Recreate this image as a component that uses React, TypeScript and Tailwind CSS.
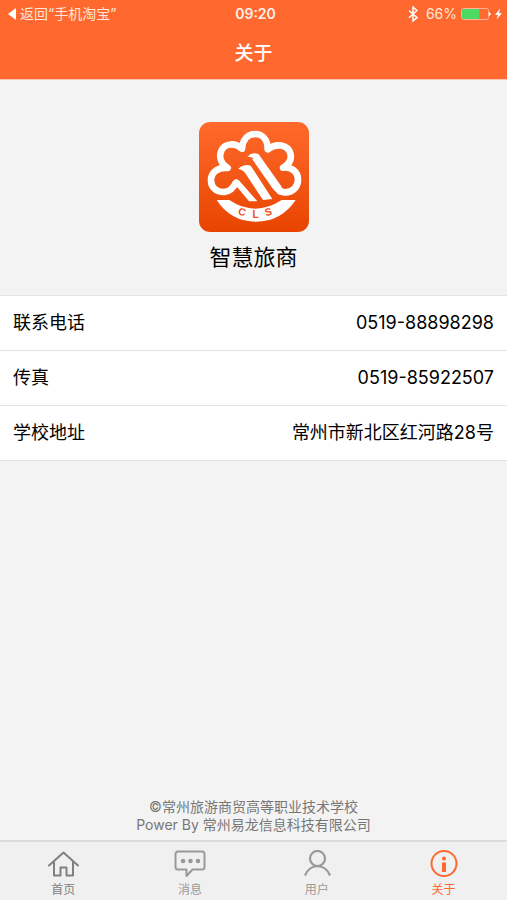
import { useState } from 'react';

type IconProps = {
  className?: string;
};

function HomeIcon({ className }: IconProps) {
  return (
    <svg viewBox="0 0 32 28" fill="none" stroke="currentColor" strokeWidth="2" strokeLinecap="round" strokeLinejoin="round" className={className}>
      <path d="M2 15.500 16.500 2.500l14.500 13" />
      <path d="M7 12v13.500h6.500V17.500h6v8H26V12" />
    </svg>
  );
}

function MessageIcon({ className }: IconProps) {
  return (
    <svg viewBox="0 0 32 28" fill="none" stroke="currentColor" strokeWidth="2" strokeLinejoin="round" className={className}>
      <path d="M4 1.500h24A2.500 2.500 0 0 1 30.500 4v13a2.500 2.500 0 0 1-2.500 2.500h-9.500L12.500 26v-6.500H4A2.500 2.500 0 0 1 1.500 17V4A2.500 2.500 0 0 1 4 1.500Z" />
      <g fill="currentColor" stroke="none">
        <circle cx="9" cy="11" r="2.300" />
        <circle cx="16.500" cy="11" r="2.300" />
        <circle cx="24" cy="11" r="2.300" />
      </g>
    </svg>
  );
}

function UserIcon({ className }: IconProps) {
  return (
    <svg viewBox="0 0 32 28" fill="none" stroke="currentColor" strokeWidth="2.200" className={className}>
      <circle cx="16.500" cy="8.500" r="7.500" />
      <path d="M4 25.500C6 20 10.800 16.200 16.500 16.200S27 20 29 25.500" />
    </svg>
  );
}

function InfoIcon({ className }: IconProps) {
  return (
    <svg viewBox="0 0 32 28" fill="none" stroke="currentColor" strokeWidth="2" className={className}>
      <circle cx="16" cy="13.500" r="12.500" />
      <circle cx="16" cy="8.500" r="2" fill="currentColor" stroke="none" />
      <path d="M16 12.500v9.500" strokeWidth="4" />
    </svg>
  );
}

function BluetoothIcon() {
  return (
    <svg viewBox="0 0 10 16" fill="none" stroke="currentColor" strokeWidth="1.500" className="h-4 w-2.5">
      <path d="m1 4.500 8 7.200L5 15V1l4 3.500-8 7.200" />
    </svg>
  );
}

function BatteryIcon() {
  return (
    <svg viewBox="0 0 42 14" className="ml-1 h-3.5 w-[42px]">
      <rect x="0.500" y="1.500" width="27" height="11" rx="2" fill="none" stroke="#ffb294" />
      <path d="M1 3.500A1.500 1.500 0 0 1 2.500 2H18.500v10h-16A1.500 1.500 0 0 1 1 10.500Z" fill="#4cd964" />
      <path d="M28.500 5.500q1.500 1.500 0 3Z" fill="#fff" stroke="#fff" />
      <path d="m39 1.500-5 6.500h3l-1.500 4.500L41 6.200h-3Z" fill="#fff" />
    </svg>
  );
}

function Logo() {
  return (
    <svg viewBox="0 0 330 330" role="img" aria-label="CLS" className="size-[110px]">
      <defs>
        <linearGradient id="logo-bg" x1="0" y1="0" x2="0" y2="1">
          <stop offset="0" stopColor="#ff6a2c" />
          <stop offset="1" stopColor="#e84400" />
        </linearGradient>
      </defs>
      <rect width="330" height="330" rx="34" fill="url(#logo-bg)" />
      <path
        d="M168 106 228 192C238 206 246 211 258 211C281 211 297 195 297 173C297 150 278 134 252 137C270 127 279 112 274 94C266 68 232 62 206 82C206 53 191 36 168 36C145 36 131 54 129 80C108 61 79 64 68 84C58 104 66 125 86 138C57 136 36 150 36 175C36 197 53 211 76 210C94 208 103 198 111 181"
        fill="none"
        stroke="#fff"
        strokeWidth="20"
        strokeLinejoin="round"
      />
      <g fill="#fff">
        <path d="M101 180q8-16 20-4l54 62h-25l-40-48Z" />
        <path d="M118 140q18-16 37-9l65 100-28 3-53-80q-7-11-21-14Z" />
        <path d="M145 104q15-16 34-7l67 94 12 29-21-3-65-99q-9-14-27-14Z" />
        <path d="M53 234h38q77 52 157 0h42q-43 65-119 65T53 234Z" />
      </g>
      <g fill="#f05018" fontSize="31" fontWeight="700" textAnchor="middle" className="font-['Liberation_Sans',sans-serif]">
        <text x="129" y="280" transform="rotate(16 129 270)">C</text>
        <text x="170" y="289">L</text>
        <text x="208" y="280" transform="rotate(-16 208 270)">S</text>
      </g>
    </svg>
  );
}

const contacts = [
  { label: '联系电话', value: '0519-88898298' },
  { label: '传真', value: '0519-85922507' },
  { label: '学校地址', value: '常州市新北区红河路28号' },
];

const tabs = [
  { id: 'home', label: '首页', Icon: HomeIcon, color: 'text-[#808080]' },
  { id: 'message', label: '消息', Icon: MessageIcon, color: 'text-[#999999]' },
  { id: 'user', label: '用户', Icon: UserIcon, color: 'text-[#999999]' },
  { id: 'about', label: '关于', Icon: InfoIcon, color: 'text-[#999999]' },
];

export default function App() {
  const [activeTab, setActiveTab] = useState('about');

  return (
    <div className="flex min-h-screen flex-col bg-[#f3f3f3] font-[Inter,'Noto_Sans_CJK_SC',sans-serif] text-black">
      <header className="border-b border-[#fbc5ae] bg-[#ff692f] text-white">
        <div className="grid h-7 grid-cols-3 items-center pl-2 pr-1 text-sm">
          <button type="button" className="flex items-center gap-1 whitespace-nowrap text-[#ffe5da]">
            <svg viewBox="0 0 8 12" className="h-3 w-2" fill="#fff">
              <path d="M8 0v12L0 6Z" />
            </svg>
            <span>返回“手机淘宝”</span>
          </button>
          <span className="text-center font-semibold text-[#fff0e9]">09:20</span>
          <div className="flex items-center justify-end">
            <BluetoothIcon />
            <span className="ml-2 text-[#ffe5da]">66%</span>
            <BatteryIcon />
          </div>
        </div>
        <h1 className="pt-3 pb-[11px] text-center text-[19px] leading-7 font-medium">关于</h1>
      </header>

      <main className="flex flex-1 flex-col">
        <section className="flex flex-col items-center pt-[42px] pb-[21px]">
          <Logo />
          <h2 className="mt-2 text-[22px] leading-[34px]">智慧旅商</h2>
        </section>

        <dl className="border-b border-[#e0e0e0] bg-white text-lg">
          {contacts.map((item) => (
            <div key={item.label} className="flex h-[55px] items-center justify-between border-t border-[#e3e3e3] px-[13px]">
              <dt>{item.label}</dt>
              <dd>{item.value}</dd>
            </div>
          ))}
        </dl>

        <footer className="mt-auto pb-1.5 text-center text-sm leading-[18px] text-[#777777]">
          <p>©常州旅游商贸高等职业技术学校</p>
          <p>Power By 常州易龙信息科技有限公司</p>
        </footer>
      </main>

      <nav className="grid grid-cols-4 border-t-2 border-[#dcdcdc] bg-[#f0f0f0] pt-2">
        {tabs.map(({ id, label, Icon, color }) => (
          <button
            key={id}
            type="button"
            onClick={() => setActiveTab(id)}
            className={`flex flex-col items-center ${activeTab === id ? 'text-[#ff692f]' : color}`}
          >
            <Icon className="h-7 w-8" />
            <span className="mt-0.5 text-xs leading-5">{label}</span>
          </button>
        ))}
      </nav>
    </div>
  );
}
